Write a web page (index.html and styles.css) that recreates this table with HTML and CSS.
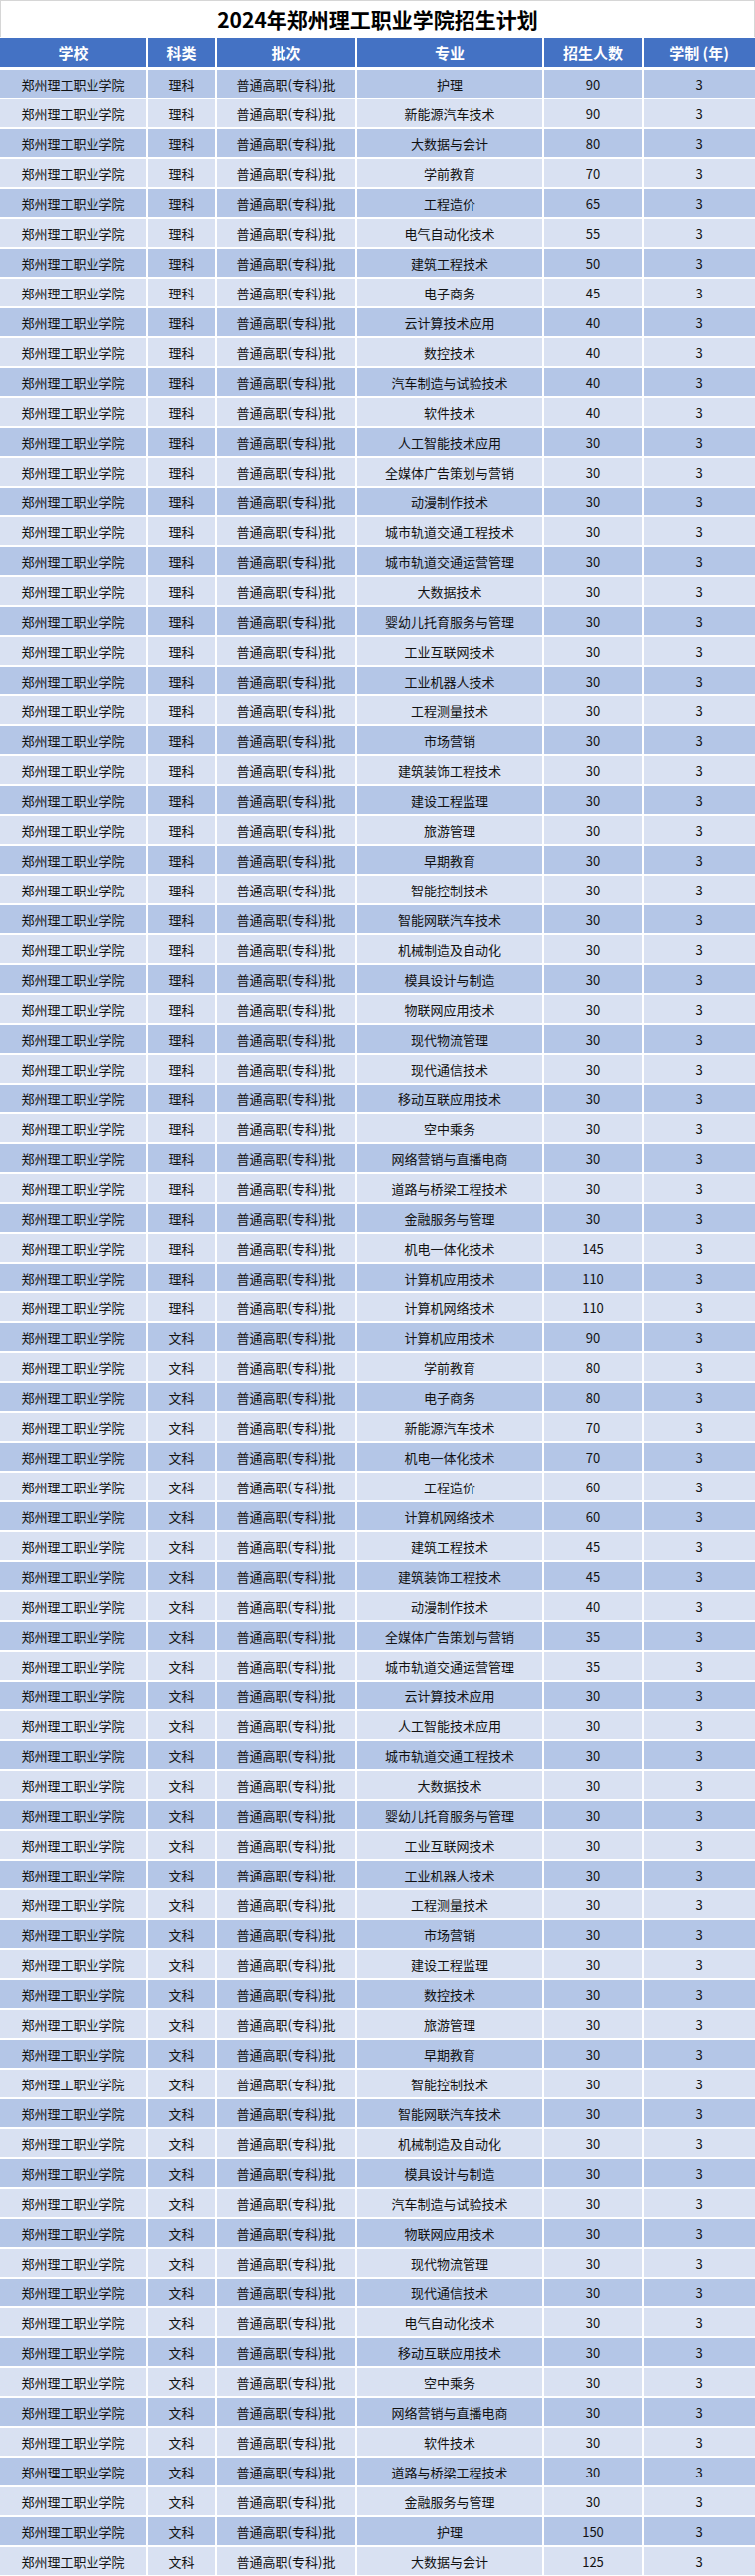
FILE: index.html
```html
<!DOCTYPE html>
<html lang="zh-CN">
<head>
<meta charset="utf-8">
<title>2024年郑州理工职业学院招生计划</title>
<link rel="stylesheet" href="styles.css">
</head>
<body>
<div class="sheet">
  <div class="title">2024年郑州理工职业学院招生计划</div>
  <div class="row head"><span>学校</span><span>科类</span><span>批次</span><span>专业</span><span>招生人数</span><span>学制 (年)</span></div>
  <div class="rows">
    <div class="row"><span>郑州理工职业学院</span><span>理科</span><span>普通高职(专科)批</span><span>护理</span><span>90</span><span>3</span></div>
    <div class="row"><span>郑州理工职业学院</span><span>理科</span><span>普通高职(专科)批</span><span>新能源汽车技术</span><span>90</span><span>3</span></div>
    <div class="row"><span>郑州理工职业学院</span><span>理科</span><span>普通高职(专科)批</span><span>大数据与会计</span><span>80</span><span>3</span></div>
    <div class="row"><span>郑州理工职业学院</span><span>理科</span><span>普通高职(专科)批</span><span>学前教育</span><span>70</span><span>3</span></div>
    <div class="row"><span>郑州理工职业学院</span><span>理科</span><span>普通高职(专科)批</span><span>工程造价</span><span>65</span><span>3</span></div>
    <div class="row"><span>郑州理工职业学院</span><span>理科</span><span>普通高职(专科)批</span><span>电气自动化技术</span><span>55</span><span>3</span></div>
    <div class="row"><span>郑州理工职业学院</span><span>理科</span><span>普通高职(专科)批</span><span>建筑工程技术</span><span>50</span><span>3</span></div>
    <div class="row"><span>郑州理工职业学院</span><span>理科</span><span>普通高职(专科)批</span><span>电子商务</span><span>45</span><span>3</span></div>
    <div class="row"><span>郑州理工职业学院</span><span>理科</span><span>普通高职(专科)批</span><span>云计算技术应用</span><span>40</span><span>3</span></div>
    <div class="row"><span>郑州理工职业学院</span><span>理科</span><span>普通高职(专科)批</span><span>数控技术</span><span>40</span><span>3</span></div>
    <div class="row"><span>郑州理工职业学院</span><span>理科</span><span>普通高职(专科)批</span><span>汽车制造与试验技术</span><span>40</span><span>3</span></div>
    <div class="row"><span>郑州理工职业学院</span><span>理科</span><span>普通高职(专科)批</span><span>软件技术</span><span>40</span><span>3</span></div>
    <div class="row"><span>郑州理工职业学院</span><span>理科</span><span>普通高职(专科)批</span><span>人工智能技术应用</span><span>30</span><span>3</span></div>
    <div class="row"><span>郑州理工职业学院</span><span>理科</span><span>普通高职(专科)批</span><span>全媒体广告策划与营销</span><span>30</span><span>3</span></div>
    <div class="row"><span>郑州理工职业学院</span><span>理科</span><span>普通高职(专科)批</span><span>动漫制作技术</span><span>30</span><span>3</span></div>
    <div class="row"><span>郑州理工职业学院</span><span>理科</span><span>普通高职(专科)批</span><span>城市轨道交通工程技术</span><span>30</span><span>3</span></div>
    <div class="row"><span>郑州理工职业学院</span><span>理科</span><span>普通高职(专科)批</span><span>城市轨道交通运营管理</span><span>30</span><span>3</span></div>
    <div class="row"><span>郑州理工职业学院</span><span>理科</span><span>普通高职(专科)批</span><span>大数据技术</span><span>30</span><span>3</span></div>
    <div class="row"><span>郑州理工职业学院</span><span>理科</span><span>普通高职(专科)批</span><span>婴幼儿托育服务与管理</span><span>30</span><span>3</span></div>
    <div class="row"><span>郑州理工职业学院</span><span>理科</span><span>普通高职(专科)批</span><span>工业互联网技术</span><span>30</span><span>3</span></div>
    <div class="row"><span>郑州理工职业学院</span><span>理科</span><span>普通高职(专科)批</span><span>工业机器人技术</span><span>30</span><span>3</span></div>
    <div class="row"><span>郑州理工职业学院</span><span>理科</span><span>普通高职(专科)批</span><span>工程测量技术</span><span>30</span><span>3</span></div>
    <div class="row"><span>郑州理工职业学院</span><span>理科</span><span>普通高职(专科)批</span><span>市场营销</span><span>30</span><span>3</span></div>
    <div class="row"><span>郑州理工职业学院</span><span>理科</span><span>普通高职(专科)批</span><span>建筑装饰工程技术</span><span>30</span><span>3</span></div>
    <div class="row"><span>郑州理工职业学院</span><span>理科</span><span>普通高职(专科)批</span><span>建设工程监理</span><span>30</span><span>3</span></div>
    <div class="row"><span>郑州理工职业学院</span><span>理科</span><span>普通高职(专科)批</span><span>旅游管理</span><span>30</span><span>3</span></div>
    <div class="row"><span>郑州理工职业学院</span><span>理科</span><span>普通高职(专科)批</span><span>早期教育</span><span>30</span><span>3</span></div>
    <div class="row"><span>郑州理工职业学院</span><span>理科</span><span>普通高职(专科)批</span><span>智能控制技术</span><span>30</span><span>3</span></div>
    <div class="row"><span>郑州理工职业学院</span><span>理科</span><span>普通高职(专科)批</span><span>智能网联汽车技术</span><span>30</span><span>3</span></div>
    <div class="row"><span>郑州理工职业学院</span><span>理科</span><span>普通高职(专科)批</span><span>机械制造及自动化</span><span>30</span><span>3</span></div>
    <div class="row"><span>郑州理工职业学院</span><span>理科</span><span>普通高职(专科)批</span><span>模具设计与制造</span><span>30</span><span>3</span></div>
    <div class="row"><span>郑州理工职业学院</span><span>理科</span><span>普通高职(专科)批</span><span>物联网应用技术</span><span>30</span><span>3</span></div>
    <div class="row"><span>郑州理工职业学院</span><span>理科</span><span>普通高职(专科)批</span><span>现代物流管理</span><span>30</span><span>3</span></div>
    <div class="row"><span>郑州理工职业学院</span><span>理科</span><span>普通高职(专科)批</span><span>现代通信技术</span><span>30</span><span>3</span></div>
    <div class="row"><span>郑州理工职业学院</span><span>理科</span><span>普通高职(专科)批</span><span>移动互联应用技术</span><span>30</span><span>3</span></div>
    <div class="row"><span>郑州理工职业学院</span><span>理科</span><span>普通高职(专科)批</span><span>空中乘务</span><span>30</span><span>3</span></div>
    <div class="row"><span>郑州理工职业学院</span><span>理科</span><span>普通高职(专科)批</span><span>网络营销与直播电商</span><span>30</span><span>3</span></div>
    <div class="row"><span>郑州理工职业学院</span><span>理科</span><span>普通高职(专科)批</span><span>道路与桥梁工程技术</span><span>30</span><span>3</span></div>
    <div class="row"><span>郑州理工职业学院</span><span>理科</span><span>普通高职(专科)批</span><span>金融服务与管理</span><span>30</span><span>3</span></div>
    <div class="row"><span>郑州理工职业学院</span><span>理科</span><span>普通高职(专科)批</span><span>机电一体化技术</span><span>145</span><span>3</span></div>
    <div class="row"><span>郑州理工职业学院</span><span>理科</span><span>普通高职(专科)批</span><span>计算机应用技术</span><span>110</span><span>3</span></div>
    <div class="row"><span>郑州理工职业学院</span><span>理科</span><span>普通高职(专科)批</span><span>计算机网络技术</span><span>110</span><span>3</span></div>
    <div class="row"><span>郑州理工职业学院</span><span>文科</span><span>普通高职(专科)批</span><span>计算机应用技术</span><span>90</span><span>3</span></div>
    <div class="row"><span>郑州理工职业学院</span><span>文科</span><span>普通高职(专科)批</span><span>学前教育</span><span>80</span><span>3</span></div>
    <div class="row"><span>郑州理工职业学院</span><span>文科</span><span>普通高职(专科)批</span><span>电子商务</span><span>80</span><span>3</span></div>
    <div class="row"><span>郑州理工职业学院</span><span>文科</span><span>普通高职(专科)批</span><span>新能源汽车技术</span><span>70</span><span>3</span></div>
    <div class="row"><span>郑州理工职业学院</span><span>文科</span><span>普通高职(专科)批</span><span>机电一体化技术</span><span>70</span><span>3</span></div>
    <div class="row"><span>郑州理工职业学院</span><span>文科</span><span>普通高职(专科)批</span><span>工程造价</span><span>60</span><span>3</span></div>
    <div class="row"><span>郑州理工职业学院</span><span>文科</span><span>普通高职(专科)批</span><span>计算机网络技术</span><span>60</span><span>3</span></div>
    <div class="row"><span>郑州理工职业学院</span><span>文科</span><span>普通高职(专科)批</span><span>建筑工程技术</span><span>45</span><span>3</span></div>
    <div class="row"><span>郑州理工职业学院</span><span>文科</span><span>普通高职(专科)批</span><span>建筑装饰工程技术</span><span>45</span><span>3</span></div>
    <div class="row"><span>郑州理工职业学院</span><span>文科</span><span>普通高职(专科)批</span><span>动漫制作技术</span><span>40</span><span>3</span></div>
    <div class="row"><span>郑州理工职业学院</span><span>文科</span><span>普通高职(专科)批</span><span>全媒体广告策划与营销</span><span>35</span><span>3</span></div>
    <div class="row"><span>郑州理工职业学院</span><span>文科</span><span>普通高职(专科)批</span><span>城市轨道交通运营管理</span><span>35</span><span>3</span></div>
    <div class="row"><span>郑州理工职业学院</span><span>文科</span><span>普通高职(专科)批</span><span>云计算技术应用</span><span>30</span><span>3</span></div>
    <div class="row"><span>郑州理工职业学院</span><span>文科</span><span>普通高职(专科)批</span><span>人工智能技术应用</span><span>30</span><span>3</span></div>
    <div class="row"><span>郑州理工职业学院</span><span>文科</span><span>普通高职(专科)批</span><span>城市轨道交通工程技术</span><span>30</span><span>3</span></div>
    <div class="row"><span>郑州理工职业学院</span><span>文科</span><span>普通高职(专科)批</span><span>大数据技术</span><span>30</span><span>3</span></div>
    <div class="row"><span>郑州理工职业学院</span><span>文科</span><span>普通高职(专科)批</span><span>婴幼儿托育服务与管理</span><span>30</span><span>3</span></div>
    <div class="row"><span>郑州理工职业学院</span><span>文科</span><span>普通高职(专科)批</span><span>工业互联网技术</span><span>30</span><span>3</span></div>
    <div class="row"><span>郑州理工职业学院</span><span>文科</span><span>普通高职(专科)批</span><span>工业机器人技术</span><span>30</span><span>3</span></div>
    <div class="row"><span>郑州理工职业学院</span><span>文科</span><span>普通高职(专科)批</span><span>工程测量技术</span><span>30</span><span>3</span></div>
    <div class="row"><span>郑州理工职业学院</span><span>文科</span><span>普通高职(专科)批</span><span>市场营销</span><span>30</span><span>3</span></div>
    <div class="row"><span>郑州理工职业学院</span><span>文科</span><span>普通高职(专科)批</span><span>建设工程监理</span><span>30</span><span>3</span></div>
    <div class="row"><span>郑州理工职业学院</span><span>文科</span><span>普通高职(专科)批</span><span>数控技术</span><span>30</span><span>3</span></div>
    <div class="row"><span>郑州理工职业学院</span><span>文科</span><span>普通高职(专科)批</span><span>旅游管理</span><span>30</span><span>3</span></div>
    <div class="row"><span>郑州理工职业学院</span><span>文科</span><span>普通高职(专科)批</span><span>早期教育</span><span>30</span><span>3</span></div>
    <div class="row"><span>郑州理工职业学院</span><span>文科</span><span>普通高职(专科)批</span><span>智能控制技术</span><span>30</span><span>3</span></div>
    <div class="row"><span>郑州理工职业学院</span><span>文科</span><span>普通高职(专科)批</span><span>智能网联汽车技术</span><span>30</span><span>3</span></div>
    <div class="row"><span>郑州理工职业学院</span><span>文科</span><span>普通高职(专科)批</span><span>机械制造及自动化</span><span>30</span><span>3</span></div>
    <div class="row"><span>郑州理工职业学院</span><span>文科</span><span>普通高职(专科)批</span><span>模具设计与制造</span><span>30</span><span>3</span></div>
    <div class="row"><span>郑州理工职业学院</span><span>文科</span><span>普通高职(专科)批</span><span>汽车制造与试验技术</span><span>30</span><span>3</span></div>
    <div class="row"><span>郑州理工职业学院</span><span>文科</span><span>普通高职(专科)批</span><span>物联网应用技术</span><span>30</span><span>3</span></div>
    <div class="row"><span>郑州理工职业学院</span><span>文科</span><span>普通高职(专科)批</span><span>现代物流管理</span><span>30</span><span>3</span></div>
    <div class="row"><span>郑州理工职业学院</span><span>文科</span><span>普通高职(专科)批</span><span>现代通信技术</span><span>30</span><span>3</span></div>
    <div class="row"><span>郑州理工职业学院</span><span>文科</span><span>普通高职(专科)批</span><span>电气自动化技术</span><span>30</span><span>3</span></div>
    <div class="row"><span>郑州理工职业学院</span><span>文科</span><span>普通高职(专科)批</span><span>移动互联应用技术</span><span>30</span><span>3</span></div>
    <div class="row"><span>郑州理工职业学院</span><span>文科</span><span>普通高职(专科)批</span><span>空中乘务</span><span>30</span><span>3</span></div>
    <div class="row"><span>郑州理工职业学院</span><span>文科</span><span>普通高职(专科)批</span><span>网络营销与直播电商</span><span>30</span><span>3</span></div>
    <div class="row"><span>郑州理工职业学院</span><span>文科</span><span>普通高职(专科)批</span><span>软件技术</span><span>30</span><span>3</span></div>
    <div class="row"><span>郑州理工职业学院</span><span>文科</span><span>普通高职(专科)批</span><span>道路与桥梁工程技术</span><span>30</span><span>3</span></div>
    <div class="row"><span>郑州理工职业学院</span><span>文科</span><span>普通高职(专科)批</span><span>金融服务与管理</span><span>30</span><span>3</span></div>
    <div class="row"><span>郑州理工职业学院</span><span>文科</span><span>普通高职(专科)批</span><span>护理</span><span>150</span><span>3</span></div>
    <div class="row"><span>郑州理工职业学院</span><span>文科</span><span>普通高职(专科)批</span><span>大数据与会计</span><span>125</span><span>3</span></div>
  </div>
</div>
</body>
</html>
```
FILE: styles.css
```css
html, body {
  margin: 0;
  padding: 0;
  background: #ffffff;
}

.sheet {
  width: 759px;
  font-family: "Noto Sans CJK SC", "Noto Sans", sans-serif;
  color: #111111;
}

.title {
  box-sizing: border-box;
  height: 37px;
  border: 1px solid #d6d6d6;
  border-bottom: none;
  display: flex;
  align-items: center;
  justify-content: center;
  font-size: 21px;
  font-weight: 700;
  color: #000000;
  letter-spacing: 0;
}

.row {
  display: grid;
  grid-template-columns: 147px 67px 139px 186px 98px 112px;
  column-gap: 2px;
  height: 28px;
}

.row span {
  display: flex;
  align-items: center;
  justify-content: center;
  font-size: 13px;
  white-space: nowrap;
}

.head {
  margin-top: 1px;
  height: 29px;
  margin-bottom: 3px;
}

.head span {
  background: #4472c4;
  color: #ffffff;
  font-weight: 700;
  font-size: 15px;
}

.rows {
  display: flex;
  flex-direction: column;
  gap: 2px;
}

.rows .row:nth-child(odd) span {
  background: #b4c6e7;
}

.rows .row:nth-child(even) span {
  background: #d9e1f2;
}
```
